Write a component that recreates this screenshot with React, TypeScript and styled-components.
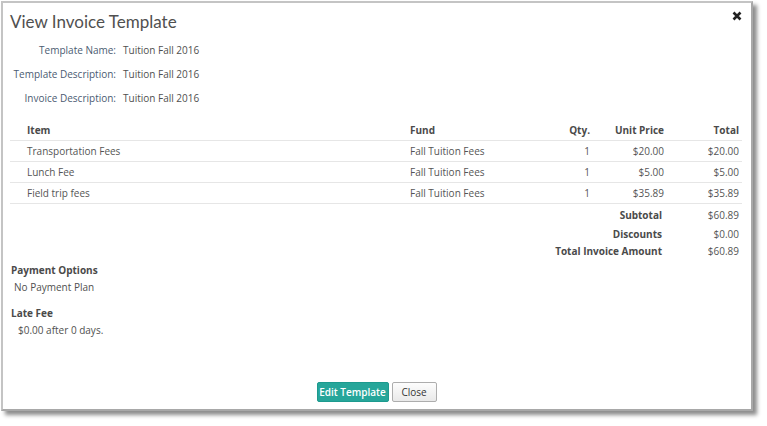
import React from "react";
import styled, { createGlobalStyle } from "styled-components";

const Global = createGlobalStyle`
  html, body { margin: 0; padding: 0; background: #fff; }
  body { font-family: "Open Sans", "Noto Sans", sans-serif; color: #555; }
`;

const Page = styled.div`
  padding: 1px 0 0 1px;
  width: 767px;
  height: 426px;
  box-sizing: border-box;
`;

const Modal = styled.div`
  position: relative;
  width: 752px;
  height: 410px;
  box-sizing: border-box;
  border: 2px solid #a8a8a8;
  border-top-color: #c4c4c4;
  border-left-color: #c4c4c4;
  background: #fff;
  box-shadow: 4px 4px 4px rgba(0, 0, 0, 0.45);
  display: flex;
  flex-direction: column;
  padding: 8px 8px 0 7px;
`;

const Title = styled.h1`
  margin: 0;
  font-family: "Lato", "Open Sans", sans-serif;
  font-size: 17px;
  font-weight: 400;
  color: #505050;
  line-height: 22px;
`;

const CloseX = styled.button`
  position: absolute;
  top: 8px;
  right: 9px;
  border: 0;
  background: none;
  padding: 0;
  width: 10px;
  height: 10px;
  display: flex;
  cursor: pointer;
`;

const Fields = styled.div`
  display: grid;
  grid-template-columns: 106px 1fr;
  column-gap: 7px;
  row-gap: 9px;
  margin-top: 10px;
  white-space: nowrap;
`;

const Label = styled.div`
  text-align: right;
  color: #4b5b72;
  font-size: 10px;
  line-height: 15px;
`;

const Value = styled.div`
  color: #505050;
  font-size: 10px;
  line-height: 15px;
`;

const Table = styled.table`
  margin-top: 12px;
  width: 732px;
  table-layout: fixed;
  border-collapse: collapse;
  font-size: 10px;
  color: #555;
  white-space: nowrap;
`;

const Th = styled.th<{ $align?: string; $w?: string }>`
  text-align: ${(p) => p.$align || "left"};
  width: ${(p) => p.$w || "auto"};
  font-weight: 700;
  color: #4a4a4a;
  padding: 3px 3px 2px 3px;
  height: 17px;
  border-bottom: 1px solid #e6e6e6;
`;

const Td = styled.td<{ $align?: string }>`
  text-align: ${(p) => p.$align || "left"};
  padding: 0 3px;
  height: 20px;
  border-bottom: 1px solid #e6e6e6;
`;

const SumLabel = styled.td<{ $h: number }>`
  text-align: right;
  font-weight: 700;
  color: #4a4a4a;
  padding: 0 5px 0 3px;
  height: ${(p) => p.$h}px;
`;

const SumValue = styled.td`
  text-align: right;
  padding: 0 3px;
`;

const Section = styled.div<{ $indent: number; $top: number }>`
  margin-top: ${(p) => p.$top}px;
  display: flex;
  flex-direction: column;
  gap: 2px;
  padding-left: 1px;
  & > p {
    margin: 0;
    padding-left: ${(p) => p.$indent}px;
    font-size: 10px;
    line-height: 15px;
    color: #505050;
  }
`;

const SectionTitle = styled.div`
  font-weight: 700;
  font-size: 10px;
  line-height: 15px;
  color: #4a4a4a;
`;

const Footer = styled.div`
  margin-top: auto;
  display: flex;
  justify-content: center;
  gap: 3px;
  padding-bottom: 7px;
`;

const Btn = styled.button<{ $primary?: boolean }>`
  font-family: inherit;
  font-size: 10px;
  height: 20px;
  padding: 0;
  border-radius: 2px;
  cursor: pointer;
  border: 1px solid ${(p) => (p.$primary ? "#1d9a8e" : "#adadad")};
  background: ${(p) =>
    p.$primary ? "#26a69a" : "linear-gradient(#fdfdfd, #e9e9e9)"};
  color: ${(p) => (p.$primary ? "#fff" : "#333")};
  font-weight: ${(p) => (p.$primary ? 600 : 400)};
  width: ${(p) => (p.$primary ? "72px" : "45px")};
`;

const rows = [
  ["Transportation Fees", "Fall Tuition Fees", "1", "$20.00", "$20.00"],
  ["Lunch Fee", "Fall Tuition Fees", "1", "$5.00", "$5.00"],
  ["Field trip fees", "Fall Tuition Fees", "1", "$35.89", "$35.89"],
];

const sums = [
  ["Subtotal", "$60.89"],
  ["Discounts", "$0.00"],
  ["Total Invoice Amount", "$60.89"],
];

export default function App() {
  return (
    <Page>
      <Global />
      <Modal>
        <Title>View Invoice Template</Title>
        <CloseX aria-label="close">
          <svg width="10" height="10" viewBox="0 0 10 10">
            <path d="M1.5 1.5 L8.5 8.5 M8.5 1.5 L1.5 8.5" stroke="#222" strokeWidth="2.6" />
          </svg>
        </CloseX>
        <Fields>
          <Label>Template Name:</Label>
          <Value>Tuition Fall 2016</Value>
          <Label>Template Description:</Label>
          <Value>Tuition Fall 2016</Value>
          <Label>Invoice Description:</Label>
          <Value>Tuition Fall 2016</Value>
        </Fields>
        <Table>
          <thead>
            <tr>
              <Th style={{ paddingLeft: 17 }}>Item</Th>
              <Th $w="150px">Fund</Th>
              <Th $align="right" $w="24px">Qty.</Th>
              <Th $align="right" $w="68px">Unit Price</Th>
              <Th $align="right" $w="69px">Total</Th>
            </tr>
          </thead>
          <tbody>
            {rows.map((r) => (
              <tr key={r[0]}>
                <Td style={{ paddingLeft: 17 }}>{r[0]}</Td>
                <Td>{r[1]}</Td>
                <Td $align="right">{r[2]}</Td>
                <Td $align="right">{r[3]}</Td>
                <Td $align="right">{r[4]}</Td>
              </tr>
            ))}
            {sums.map((s, i) => (
              <tr key={s[0]}>
                <SumLabel colSpan={4} $h={i === 0 ? 21 : 17}>{s[0]}</SumLabel>
                <SumValue>{s[1]}</SumValue>
              </tr>
            ))}
          </tbody>
        </Table>
        <Section $indent={3} $top={4}>
          <SectionTitle>Payment Options</SectionTitle>
          <p>No Payment Plan</p>
        </Section>
        <Section $indent={7} $top={11}>
          <SectionTitle>Late Fee</SectionTitle>
          <p>$0.00 after 0 days.</p>
        </Section>
        <Footer>
          <Btn $primary>Edit Template</Btn>
          <Btn>Close</Btn>
        </Footer>
      </Modal>
    </Page>
  );
}
